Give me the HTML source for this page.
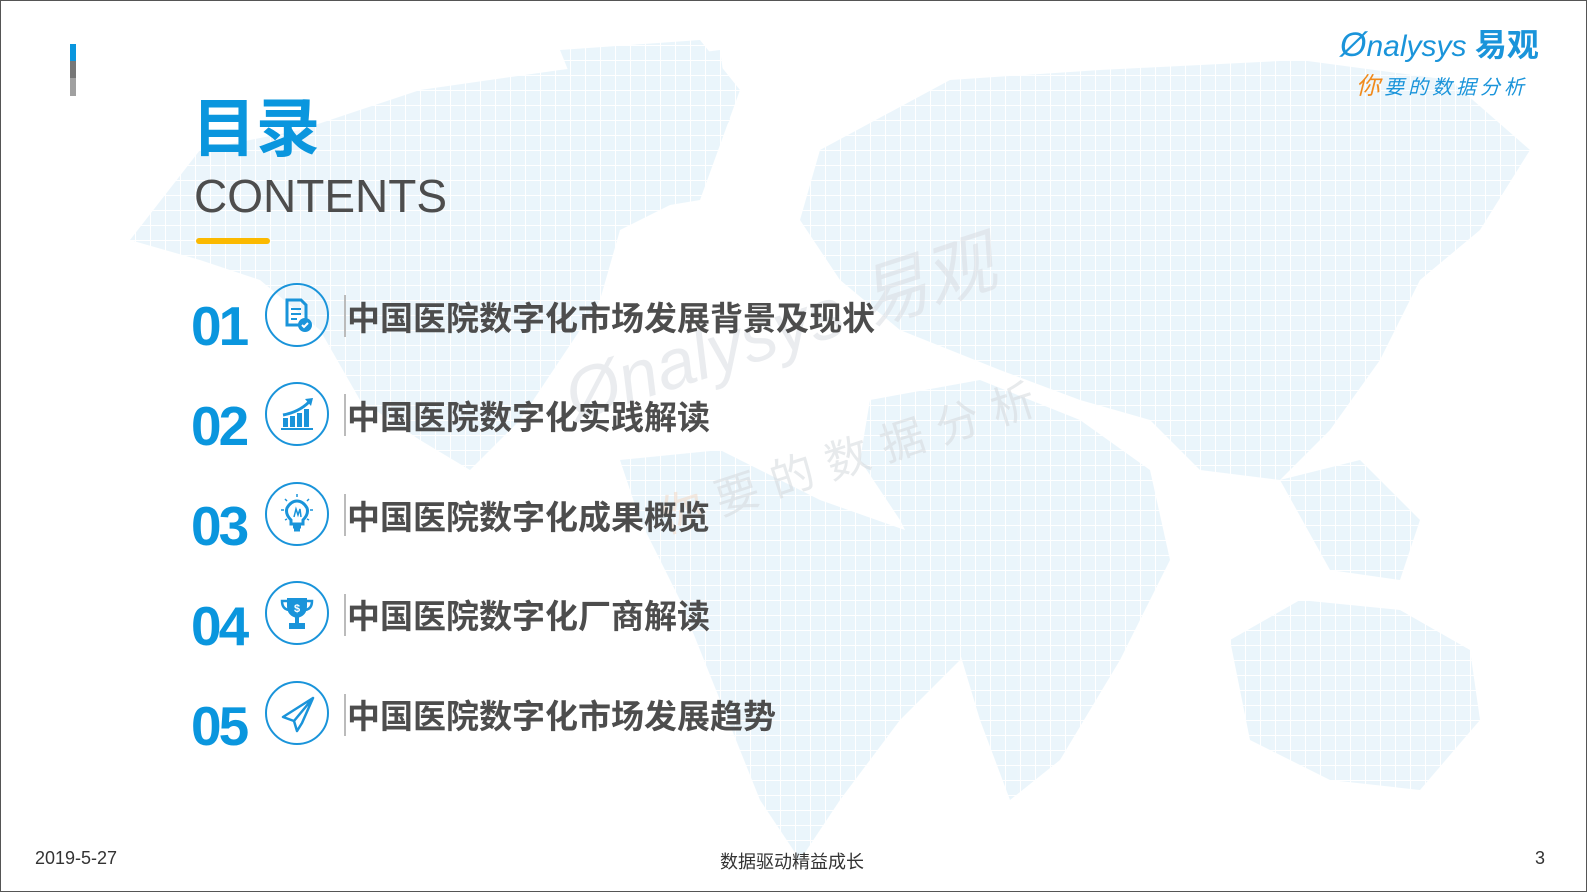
<!DOCTYPE html>
<html><head><meta charset="utf-8"><style>
html,body{margin:0;padding:0}
body{width:1587px;height:892px;position:relative;overflow:hidden;background:#fff;font-family:"Liberation Sans","Noto Sans CJK SC",sans-serif;}
.frame{position:absolute;left:0;top:0;width:1585px;height:890px;border:1px solid #555;box-sizing:content-box}
.abs{position:absolute}
.num{position:absolute;left:191px;font-size:55px;font-weight:bold;color:#0a96de;letter-spacing:-3px;line-height:1}
.txt{position:absolute;left:347px;font-size:33px;font-weight:bold;color:#4d4d4d;line-height:1;font-family:"Liberation Sans","Noto Sans CJK SC",sans-serif}
.bar{position:absolute;left:344px;width:2px;height:42px;background:#bbb}
.circ{position:absolute;left:265px;width:60px;height:60px;border:2px solid #1a94da;border-radius:50%}
.circ svg{position:absolute;left:0;top:0}
</style></head><body>
<svg class="abs" style="left:0;top:0" width="1587" height="892">
<defs><pattern id="g" width="15" height="15" patternUnits="userSpaceOnUse"><rect width="15" height="15" fill="#e4f2fa"/><path d="M0 0H15M0 0V15" stroke="#fff" stroke-width="2"/></pattern></defs>
<g fill="url(#g)" opacity="0.75">
<path d="M130 240 L200 150 L300 130 L420 90 L560 70 L640 60 L720 50 L730 120 L680 200 L620 230 L600 300 L560 360 L520 420 L470 470 L420 440 L360 400 L320 330 L260 280 L200 260 Z"/>
<path d="M560 50 L700 40 L740 90 L700 200 L640 210 L600 150 Z"/>
<path d="M620 460 L720 450 L820 500 L990 560 L960 660 L900 720 L840 800 L800 860 L760 800 L720 700 L680 600 L640 520 Z"/>
<path d="M820 150 L950 80 L1100 70 L1300 60 L1450 80 L1530 150 L1480 230 L1420 280 L1380 360 L1330 430 L1280 480 L1200 470 L1150 420 L1080 400 L1000 370 L900 330 L840 280 L800 220 Z"/>
<path d="M870 400 L980 380 L1080 420 L1150 470 L1170 560 L1120 660 L1060 760 L1010 800 L980 720 L950 620 L900 520 L860 460 Z"/>
<path d="M1230 640 L1300 600 L1400 610 L1470 650 L1480 720 L1420 790 L1330 780 L1250 740 Z"/>
<path d="M1280 480 L1360 460 L1420 520 L1400 580 L1330 570 Z"/>
</g>
</svg>
<div class="abs" style="left:550px;top:345px;transform:rotate(-18deg);transform-origin:left top;color:#d9dde2;opacity:.55;font-size:70px;font-style:italic;white-space:nowrap">Ønalysys 易观</div>
<div class="abs" style="left:650px;top:485px;transform:rotate(-18deg);transform-origin:left top;color:#d5d9dd;opacity:.55;font-size:44px;letter-spacing:14px;white-space:nowrap"><span style="color:#f3d8c6">你</span>要的数据分析</div>

<div class="abs" style="left:70px;top:44px;width:6px;height:17px;background:#0a96de"></div>
<div class="abs" style="left:70px;top:61px;width:6px;height:17px;background:#777"></div>
<div class="abs" style="left:70px;top:78px;width:6px;height:18px;background:#a0a0a0"></div>

<div class="abs" style="left:192px;top:96px;font-size:64px;font-weight:bold;color:#0a96de;line-height:1.05">目录</div>
<div class="abs" style="left:194px;top:173px;font-size:46px;color:#4d4d4d;line-height:1">CONTENTS</div>
<div class="abs" style="left:196px;top:238px;width:74px;height:6px;border-radius:3px;background:#fbb900"></div>

<div class="abs" style="left:1340px;top:28px;font-size:30px;font-style:italic;color:#1a94da;line-height:1;white-space:nowrap"><span style="font-size:34px">Ø</span>nalysys <b style="font-style:normal;font-size:32px">易观</b></div>
<div class="abs" style="left:1356px;top:66px;font-size:20px;font-style:italic;color:#1a94da;letter-spacing:4px;white-space:nowrap"><span style="color:#f08a1c;font-size:24px">你</span>要的数据分析</div>

<div class="num" style="top:299px">01</div>
<div class="circ" style="top:283px"><svg width="60" height="60" fill="#1a94da"><path d="M20 15h14l5 5v20H20z" fill="none" stroke="#1a94da" stroke-width="3"/><path d="M24 24h10M24 29h10M24 34h6" stroke="#1a94da" stroke-width="2"/><circle cx="38" cy="40" r="7"/><path d="M35 40l2 2 4-4" stroke="#fff" stroke-width="2" fill="none"/></svg></div>
<div class="bar" style="top:295px"></div>
<div class="txt" style="top:302px">中国医院数字化市场发展背景及现状</div>

<div class="num" style="top:399px">02</div>
<div class="circ" style="top:382px"><svg width="60" height="60" fill="#1a94da"><rect x="16" y="34" width="5" height="9"/><rect x="23" y="32" width="5" height="11"/><rect x="30" y="29" width="5" height="14"/><rect x="37" y="25" width="5" height="18"/><rect x="14" y="44" width="32" height="2"/><path d="M16 31 Q32 28 42 18" stroke="#1a94da" stroke-width="3" fill="none"/><path d="M38 15l8-1-2 8z"/></svg></div>
<div class="bar" style="top:394px"></div>
<div class="txt" style="top:401px">中国医院数字化实践解读</div>

<div class="num" style="top:499px">03</div>
<div class="circ" style="top:482px"><svg width="60" height="60" fill="none" stroke="#1a94da" stroke-width="3"><path d="M24 36 Q18 30 20 24 Q24 17 30 17 Q36 17 40 24 Q42 30 36 36 V40 H24 Z"/><path d="M26 43h8M27 46h6" /><path d="M27 33l2-8 2 6 2-6 1 8" stroke-width="1.5"/><path d="M30 10v3M14 26h3M43 26h3M18 15l2 2M42 15l-2 2M18 36l2-1M42 36l-2-1" stroke-width="1.5"/></svg></div>
<div class="bar" style="top:494px"></div>
<div class="txt" style="top:501px">中国医院数字化成果概览</div>

<div class="num" style="top:599px">04</div>
<div class="circ" style="top:581px"><svg width="60" height="60" fill="#1a94da"><path d="M20 15h20v8q0 10-10 12q-10-2-10-12z"/><path d="M20 18h-5q0 8 7 9M40 18h5q0 8-7 9" stroke="#1a94da" stroke-width="2.5" fill="none"/><rect x="28" y="34" width="4" height="6"/><rect x="22" y="40" width="16" height="6"/><text x="30" y="29" fill="#fff" font-size="11" font-weight="bold" text-anchor="middle" font-family="Liberation Sans">$</text></svg></div>
<div class="bar" style="top:594px"></div>
<div class="txt" style="top:600px">中国医院数字化厂商解读</div>

<div class="num" style="top:699px">05</div>
<div class="circ" style="top:681px"><svg width="60" height="60" fill="none" stroke="#1a94da" stroke-width="2.5" stroke-linejoin="round"><path d="M46 15L16 34l11 4zM46 15L27 38l3 10 5-8zM46 15L35 40"/></svg></div>
<div class="bar" style="top:694px"></div>
<div class="txt" style="top:700px">中国医院数字化市场发展趋势</div>

<div class="abs" style="left:35px;top:848px;font-size:18px;color:#333">2019-5-27</div>
<div class="abs" style="left:720px;top:848px;font-size:18px;color:#333">数据驱动精益成长</div>
<div class="abs" style="left:1535px;top:848px;font-size:18px;color:#333">3</div>
<div class="frame"></div>
</body></html>
